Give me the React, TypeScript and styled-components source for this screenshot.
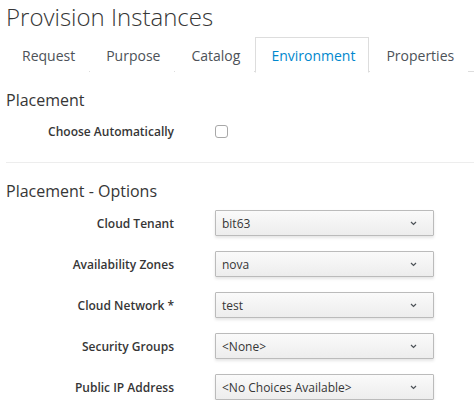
import React from "react";
import styled, { createGlobalStyle } from "styled-components";

const Global = createGlobalStyle`
  html, body { margin: 0; padding: 0; background: #fff; }
  body { font-family: "Open Sans", "Liberation Sans", sans-serif; color: #363636; }
`;

const Page = styled.div`
  padding: 0 0 0 6px;
`;

const Title = styled.h1`
  margin: 0;
  font-size: 24px;
  font-weight: 300;
  line-height: 33px;
  color: #363636;
`;

const TabBar = styled.ul`
  display: flex;
  list-style: none;
  margin: 4px 0 0 0;
  padding: 0;
  border-bottom: 1px solid #ddd;
  height: 34px;
`;

const Tab = styled.li<{ $active?: boolean }>`
  margin: 0 1px -1px 0;
  padding: 0 13px 0 15px;
  height: 34px;
  display: flex;
  align-items: center;
  font-size: 14px;
  color: ${(p) => (p.$active ? "#0088ce" : "#4d5258")};
  border: 1px solid ${(p) => (p.$active ? "#ddd" : "transparent")};
  border-bottom-color: ${(p) => (p.$active ? "#fff" : "transparent")};
  background: #fff;
`;

const Section = styled.h3`
  margin: 18px 0 0 0;
  font-size: 16px;
  font-weight: 400;
  line-height: 20px;
  color: #363636;
`;

const Form = styled.div<{ $gap?: number }>`
  display: flex;
  flex-direction: column;
  gap: 15px;
  margin-top: ${(p) => p.$gap ?? 10}px;
`;

const Row = styled.div`
  display: grid;
  grid-template-columns: 168px 219px;
  column-gap: 41px;
  align-items: center;
  min-height: 26px;
`;

const Label = styled.label`
  text-align: right;
  font-size: 12px;
  font-weight: 600;
  color: #363636;
`;

const Check = styled.span`
  display: block;
  width: 11px;
  height: 11px;
  border: 1px solid #a8a8a8;
  border-radius: 3px;
  background: #fff;
`;

const Divider = styled.hr`
  border: 0;
  border-top: 1px solid #ededed;
  margin: 18px 0 0 0;
`;

const Select = styled.div`
  box-sizing: border-box;
  height: 26px;
  display: flex;
  align-items: center;
  justify-content: space-between;
  padding: 0 16px 0 6px;
  border: 1px solid #bbb;
  border-radius: 1px;
  background: linear-gradient(to bottom, #fafafa 0, #ededed 100%);
  box-shadow: 0 2px 3px rgba(3, 3, 3, 0.1);
  font-size: 12px;
  color: #363636;
`;

const Chevron = () => (
  <svg width="7" height="5" viewBox="0 0 7 5" aria-hidden>
    <path d="M1 1 L3.5 3.5 L6 1" fill="none" stroke="#4d5258" strokeWidth="1.2" />
  </svg>
);

const fields: [string, string][] = [
  ["Cloud Tenant", "bit63"],
  ["Availability Zones", "nova"],
  ["Cloud Network *", "test"],
  ["Security Groups", "<None>"],
  ["Public IP Address", "<No Choices Available>"],
];

export default function App() {
  return (
    <Page>
      <Global />
      <Title>Provision Instances</Title>
      <TabBar>
        {["Request", "Purpose", "Catalog", "Environment", "Properties"].map((t) => (
          <Tab key={t} $active={t === "Environment"}>
            {t}
          </Tab>
        ))}
      </TabBar>
      <Section>Placement</Section>
      <Form $gap={8}>
        <Row>
          <Label>Choose Automatically</Label>
          <Check />
        </Row>
      </Form>
      <Divider />
      <Section>Placement - Options</Section>
      <Form $gap={9}>
        {fields.map(([l, v]) => (
          <Row key={l}>
            <Label>{l}</Label>
            <Select>
              <span>{v}</span>
              <Chevron />
            </Select>
          </Row>
        ))}
      </Form>
    </Page>
  );
}
